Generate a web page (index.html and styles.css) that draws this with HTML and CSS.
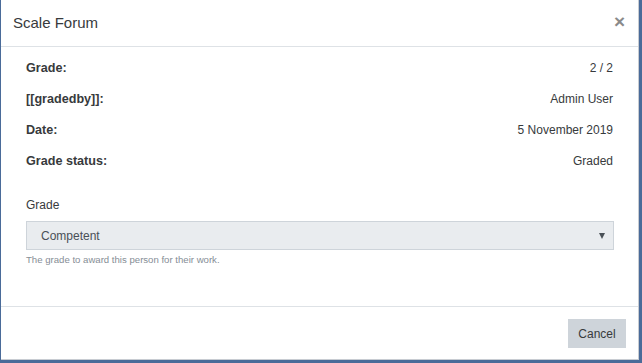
FILE: index.html
```html
<!DOCTYPE html>
<html>
<head>
<meta charset="utf-8">
<link rel="stylesheet" href="styles.css">
</head>
<body>
<div class="modal">
  <div class="modal-header">
    <h5 class="modal-title">Scale Forum</h5>
    <span class="close">×</span>
  </div>
  <div class="modal-body">
    <div class="info">
      <div class="row"><span class="label">Grade:</span><span class="value">2 / 2</span></div>
      <div class="row"><span class="label">[[gradedby]]:</span><span class="value">Admin User</span></div>
      <div class="row"><span class="label">Date:</span><span class="value">5 November 2019</span></div>
      <div class="row"><span class="label">Grade status:</span><span class="value">Graded</span></div>
    </div>
    <div class="field">
      <div class="field-label">Grade</div>
      <div class="select"><span>Competent</span><span class="arrow"></span></div>
      <div class="help">The grade to award this person for their work.</div>
    </div>
  </div>
  <div class="modal-footer">
    <button class="btn">Cancel</button>
  </div>
</div>
</body>
</html>
```
FILE: styles.css
```css
html, body {
  margin: 0;
  padding: 0;
}
body {
  background: #4a6b99;
  width: 642px;
  height: 363px;
  overflow: hidden;
  font-family: "Liberation Sans", Arial, sans-serif;
  color: #373a3c;
}
.modal {
  margin-left: 1px;
  width: 638px;
  height: 360px;
  background: #fff;
  border-right: 1px solid #c8ccd2;
  border-bottom: 1px solid #c8ccd2;
  box-sizing: border-box;
  display: flex;
  flex-direction: column;
}
.modal-header {
  height: 47px;
  box-sizing: border-box;
  border-bottom: 1px solid #dee2e6;
  display: flex;
  align-items: center;
  justify-content: space-between;
  padding: 0 13px 1px 12px;
}
.modal-title {
  margin: 0;
  font-size: 15px;
  font-weight: normal;
  color: #373a3c;
}
.close {
  font-size: 19px;
  font-weight: bold;
  color: #8a8a8a;
  line-height: 1;
  margin-top: -3px;
}
.modal-body {
  flex: 1;
  padding: 14px 24px 0 25px;
}
.info .row {
  display: flex;
  justify-content: space-between;
  height: 31px;
  font-size: 12px;
  padding-right: 1px;
}
.label {
  font-weight: bold;
  font-size: 12.6px;
}
.field {
  margin-top: 13px;
}
.field-label {
  font-size: 12px;
  height: 23px;
}
.select {
  height: 29px;
  box-sizing: border-box;
  background: #e9ecef;
  border: 1px solid #ced4da;
  display: flex;
  align-items: center;
  justify-content: space-between;
  padding: 0 8px 0 14px;
  font-size: 12px;
  color: #495057;
}
.arrow {
  width: 0;
  height: 0;
  border-left: 3.5px solid transparent;
  border-right: 3.5px solid transparent;
  border-top: 6px solid #495057;
}
.help {
  margin-top: 4px;
  font-size: 9.6px;
  color: #868e96;
}
.modal-footer {
  height: 53px;
  box-sizing: border-box;
  border-top: 1px solid #dee2e6;
  display: flex;
  justify-content: flex-end;
  align-items: flex-start;
  padding: 12px 12px 0 0;
}
.btn {
  font-family: "Liberation Sans", Arial, sans-serif;
  font-size: 12px;
  color: #373a3c;
  background: #ced4da;
  border: none;
  width: 58px;
  height: 29px;
  padding: 0;
}
```
